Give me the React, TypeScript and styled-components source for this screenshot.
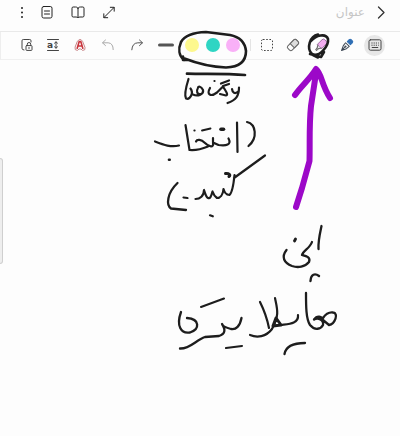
import React from "react";
import styled, { createGlobalStyle } from "styled-components";

const GlobalStyle = createGlobalStyle`
  * { box-sizing: border-box; }
  body { margin: 0; background: #fdfdfd; font-family: "Noto Sans", "DejaVu Sans", sans-serif; }
`;

const Page = styled.div`
  position: relative;
  display: flex;
  flex-direction: column;
  min-height: 100vh;
  overflow: hidden;
  background: #fdfdfd;
`;

const Header = styled.header`
  display: flex;
  align-items: center;
  height: 32px;
  padding: 0 9px 7px 10px;
  border-bottom: 1px solid #e9e9e9;
`;

const HeaderActions = styled.div`
  display: grid;
  grid-template-columns: 24px 26px 36px 26px;
`;

const IconButton = styled.button<{ $active?: boolean }>`
  display: flex;
  flex: none;
  align-items: center;
  justify-content: center;
  justify-self: center;
  width: ${(p) => (p.$active ? 21 : 20)}px;
  height: ${(p) => (p.$active ? 21 : 24)}px;
  padding: 0;
  border: 0;
  border-radius: 50%;
  background: ${(p) => (p.$active ? "#e7e7e7" : "transparent")};
  color: #444;
  cursor: pointer;
`;

const TitleInput = styled.input`
  flex: 1;
  min-width: 0;
  height: 24px;
  padding: 0 6px;
  border: 0;
  outline: 0;
  background: transparent;
  color: #333;
  font: 12px "DejaVu Sans", sans-serif;
  &::placeholder { color: #c6c6c6; opacity: 1; }
`;

const Toolbar = styled.div`
  display: grid;
  grid-template-columns: 26fr 27fr 27fr 29fr 28fr 30fr 23fr 20fr 20fr 14fr 20fr 31fr 25fr 28fr 27fr;
  align-items: center;
  height: 28px;
  padding: 0 12px 1px 13px;
  border-bottom: 1px solid #f0f0f0;
  border-left: 1px solid #eeeeee;
`;

const Swatch = styled.button<{ $color: string }>`
  justify-self: center;
  width: 14px;
  height: 14px;
  padding: 0;
  border: 0;
  border-radius: 50%;
  background: ${(p) => p.$color};
`;

const Divider = styled.span`
  justify-self: center;
  width: 1px;
  height: 12px;
  background: #e4e4e4;
`;

const Note = styled.main`
  display: flex;
  flex: 1;
  padding-top: 98px;
`;

const EdgeHandle = styled.div`
  width: 3px;
  height: 106px;
  border: 1px solid #cfcfcf;
  border-left: 0;
  border-radius: 0 3px 3px 0;
  background: #eeeeee;
`;

const Ink = styled.svg`
  position: absolute;
  top: 0;
  left: 0;
  width: 100%;
  height: auto;
  pointer-events: none;
`;

const Glyph = ({ children }: { children: React.ReactNode }) => (
  <svg width="16" height="16" viewBox="0 0 16 16" fill="none" stroke="currentColor"
    strokeWidth="1" strokeLinecap="round" strokeLinejoin="round" aria-hidden="true">
    {children}
  </svg>
);

const MoreIcon = () => (
  <Glyph><g fill="#222" stroke="none"><circle cx="8" cy="4" r="1" /><circle cx="8" cy="8.5" r="1" /><circle cx="8" cy="13" r="1" /></g></Glyph>
);
const PageIcon = () => (
  <Glyph><g stroke="#222"><rect x="3" y="2.5" width="10" height="11.5" rx="1.7" /><path d="M5.5 7h5M5.5 10h5" /></g></Glyph>
);
const BookIcon = () => (
  <Glyph><path stroke="#222" d="M8 4.2C7.4 3.3 6.7 3 5.5 3H3.2Q2 3 2 4.2v7.6Q2 13 3.2 13h2.9q1.3 0 1.9.9.6-.9 1.9-.9h2.9q1.2 0 1.2-1.2V4.2Q14 3 12.8 3h-2.3C9.3 3 8.6 3.3 8 4.2zM8 4.2v9.3" /></Glyph>
);
const ExpandIcon = () => (
  <Glyph><path stroke="#222" d="M3 13.5 13 3.5M9.3 3.3H13.2V7.2M2.8 9.8v3.9h3.9" /></Glyph>
);
const BackIcon = () => (
  <Glyph><path stroke="#333" strokeWidth="1.3" d="m5.5 3 5.5 5.5L5.5 14" /></Glyph>
);
const LockIcon = () => (
  <Glyph><path d="M12 5V3.8Q12 2.5 10.7 2.5H4.3Q3 2.5 3 3.8v7.4q0 1.8 2 1.8" /><rect x="7" y="8.6" width="6" height="4.8" rx=".7" /><path d="M8.3 8.5V7.2a1.7 1.7 0 0 1 3.4 0v1.3M10 10.5v1" /></Glyph>
);
const Letter = styled.text`
  font-family: "DejaVu Sans", sans-serif;
  font-size: 9px;
  font-weight: 700;
`;
const TextSizeIcon = () => (
  <Glyph><path d="M2.5 2.5h11M2.5 13.5h11M11 5v6M9.5 6.2 11 4.8l1.5 1.4M9.5 9.8l1.5 1.4 1.5-1.4" /><Letter x="2" y="11" fill="#444" stroke="none">a</Letter></Glyph>
);
const StyleTextIcon = () => (
  <Glyph>
    <path stroke="#c98588" d="M5.4 4.4Q8 .4 10.6 4.4L13 10.5q.7 3-2.4 2.9L8.9 12H7.1l-1.7 1.4Q2.3 13.5 3 10.5z" />
    <path stroke="#c9353d" strokeWidth="1.6" d="M5.2 11.2 7.2 4.6h1.6l2 6.6M6.2 9h3.6" />
  </Glyph>
);
const UndoIcon = () => (
  <Glyph><path stroke="#aaa" d="M5.5 3 2.5 5.8l3 2.8M2.8 5.8h5.4q5 .4 5 6.8" /></Glyph>
);
const RedoIcon = () => (
  <Glyph><path stroke="#555" d="m10.5 3 3 2.8-3 2.8M13.2 5.8H8.8q-5.5.2-6 7" /></Glyph>
);
const StrokeIcon = () => (
  <Glyph><path stroke="#555" strokeWidth="3" d="M1.5 8h13" /></Glyph>
);
const SelectIcon = () => (
  <Glyph><rect x="2.5" y="2.5" width="11" height="11" rx="1.5" strokeDasharray="1.6 1.6" strokeLinecap="butt" /></Glyph>
);
const EraserIcon = () => (
  <Glyph><g transform="rotate(-45 8 8)"><rect x="2" y="5" width="12" height="6" rx="1.8" stroke="#666" /><path fill="#ddd" stroke="#666" d="M7 5h5.2q1.8 0 1.8 1.8v2.4q0 1.8-1.8 1.8H7z" /></g></Glyph>
);
const HighlighterIcon = () => (
  <Glyph><g transform="rotate(-45 8 8)"><path fill="#f3adf0" stroke="#8d5c93" strokeWidth=".8" d="M6 5h6.4Q14.4 5 14.4 7v2q0 2-2 2H6z" /><path stroke="#666" d="M6 5.8 3.5 7v2L6 10.2M3.5 7.3 1 7.6v1.2h2.5" /></g></Glyph>
);
const PenIcon = () => (
  <Glyph><g transform="rotate(-45 8 8)"><path fill="#2f6fb5" stroke="#2f6fb5" d="M10.6 5.8h2.7q1.4 0 1.4 1.4v1.6q0 1.4-1.4 1.4h-2.7z" /><path stroke="#3c4754" d="M8.6 5.4 5 5.8.3 8 5 10.2l3.6.4zM.5 8h4" /><circle cx="5.8" cy="8" r=".6" stroke="#3c4754" /></g></Glyph>
);
const KeyboardIcon = () => (
  <Glyph><rect x="2" y="2.8" width="12" height="10.4" rx="1.5" /><path strokeDasharray="1.2 1" strokeLinecap="butt" d="M4.4 6h7.4M4.4 8.2h7.4" /><path d="M5.2 10.5h5.6" /></Glyph>
);

/* Freehand strokes, in page coordinates at a 400 unit width. */
const strokes = [
  // ring round the colours and the bar under it
  { w: 2.6, d: "M184 60C179 56 178 49 181 42C185 35 193 32.5 206 32L230 35C240 37 245 42 246 51C246 60 241 67 226 67.5C210 67 196 63 183 58M183 56.5V60L187 60" },
  { w: 2.7, d: "M187 73.7C205 74.2 226 73.5 245 75" },
  // ring round the highlighter
  { w: 2.6, d: "M318 34.5C310 36 306 48 312 54C319 58 329 46 328 39C326 33 316 35 311 41M310 54L321 57L324 52M313 55L318 57.5" },
  // first word
  { w: 2.2, d: "M188.5 79C186 87 184 95 186 98.5C190 100 194 93 190.5 88.5M193 94.5C198 97 204 94 203 90C201 86 198 86 198 88M198 88C196 91 197 95 201 94" },
  { w: 2.2, d: "M210 88C206 95 211 97 217 92.5L223 86.5C225 90 229 95 226 95.5L220 94M223 86L229 84M221 83.5L229 80.5" },
  { w: 2.2, d: "M239 87.5C239 96 236 100 227.5 103M232 89C232.5 93 235 94 237.5 92" },
  { w: 1.8, d: "M214.3 81h.4" },
  // second word, with its opening bracket
  { w: 2.2, d: "M247 122C256 124 258 138 248.5 146" },
  { w: 2.2, d: "M237 122.5L237.5 152" },
  { w: 2.2, d: "M228.5 138.5C232 145 226 146 218.5 145L213 142.5V138M213 143C214 148 209 147 205 143C201 139 197 139 196 141.5M208 146.5C202 149 195 150.5 189.5 150L185.5 125" },
  { w: 1.9, d: "M202 130.5L210.5 128.5M194.3 130.5h.4" },
  { w: 3.6, d: "M221 129.3L223.5 129.3" },
  { w: 2.2, d: "M155 141.5C164 145 171 147.5 179 145.5" },
  { w: 2.6, d: "M169 159.7h.7" },
  // third word, with its closing bracket
  { w: 2.2, d: "M265 155.5L234 178M234.5 175C233.5 185 232 193 229.5 195C226 195 224 191 223.5 189C223 195 220 198 217 198C214 196 213 193 212.5 191.5C211 197 210 199 208 198C206 197 205 193 204 190C204 196 200 199 195.5 199" },
  { w: 3, d: "M225.5 173.5C229 173 231 175 229 176.5" },
  { w: 2.3, d: "M177.5 183C167 193 166 205 171 208.5L186 210" },
  { w: 2.2, d: "M183.5 197.5L187.5 198M210 215.3L212.8 216.3" },
  // fourth word
  { w: 2.3, d: "M321.5 226C320 233 318 241 318.5 249" },
  { w: 2.3, d: "M312 242C310 248 303 251 302 255C306 256 311 257 309 262C305 267 298 268 292 266C284 263 281 257 286.5 250" },
  { w: 2.8, d: "M294.5 241L295.5 239" },
  { w: 2.4, d: "M310.5 281C311 274 315 273 319 276" },
  // last line
  { w: 2.3, d: "M306 293C306 306 306 319 310 325C315 331 321 329 323 325C324 320 318 317 314 319.5M314 319.5C317 315 322 316 323 320L329 325C335 324 339 313 333 312.5C329 312 325 315 323 318" },
  { w: 2.2, d: "M298 315C299 324 288 324 281 325M275 298C277 308 280 315 272 329C266 337 257 338 250 335M260 302C263 308 267 318 269 328" },
  { w: 3, d: "M276 318L281 325L273 326Z" },
  { w: 2.3, d: "M284.5 354C286 345 296 343 305 343" },
  { w: 2.3, d: "M241.5 318C240 326 236 330 231 329C227 328 223 327 222 324C226 330 225 334 219 336L205 337C196 340 190 349 180 348.5" },
  { w: 2.3, d: "M181 312C176 326 181 334 190 332.5C200 329 200 319 187 318" },
  { w: 2.1, d: "M201 307L224 298.5M226 348L242 346" },
];

const Drawing = () => (
  <Ink viewBox="0 0 400 436" fill="none" strokeLinecap="round" strokeLinejoin="round" aria-hidden="true">
    {strokes.map((s) => <path key={s.d} d={s.d} stroke="#1d1d1d" strokeWidth={s.w} />)}
    <path d="M296 207L302 188L309.5 161C310 143 309 125 311 106L316.5 70M295 95C302 85 310 79 316 69C322 74 321 84 330 98" stroke="#9c08c8" strokeWidth="6" />
  </Ink>
);

export default function App() {
  return (
    <Page>
      <GlobalStyle />
      <Header>
        <HeaderActions>
          <IconButton aria-label="More"><MoreIcon /></IconButton>
          <IconButton aria-label="Page"><PageIcon /></IconButton>
          <IconButton aria-label="Reading"><BookIcon /></IconButton>
          <IconButton aria-label="Full screen"><ExpandIcon /></IconButton>
        </HeaderActions>
        <TitleInput dir="rtl" aria-label="عنوان" placeholder="عنوان" />
        <IconButton aria-label="Back"><BackIcon /></IconButton>
      </Header>
      <Toolbar role="toolbar">
        <IconButton aria-label="Lock canvas"><LockIcon /></IconButton>
        <IconButton aria-label="Text size"><TextSizeIcon /></IconButton>
        <IconButton aria-label="Text style"><StyleTextIcon /></IconButton>
        <IconButton aria-label="Undo"><UndoIcon /></IconButton>
        <IconButton aria-label="Redo"><RedoIcon /></IconButton>
        <IconButton aria-label="Thickness"><StrokeIcon /></IconButton>
        <Swatch $color="#fdf88e" aria-label="Yellow" />
        <Swatch $color="#2fd5c3" aria-label="Turquoise" />
        <Swatch $color="#f9b0f7" aria-label="Pink" />
        <Divider />
        <IconButton aria-label="Select"><SelectIcon /></IconButton>
        <IconButton aria-label="Eraser"><EraserIcon /></IconButton>
        <IconButton aria-label="Highlighter"><HighlighterIcon /></IconButton>
        <IconButton aria-label="Pen"><PenIcon /></IconButton>
        <IconButton $active aria-label="Keyboard"><KeyboardIcon /></IconButton>
      </Toolbar>
      <Note><EdgeHandle /></Note>
      <Drawing />
    </Page>
  );
}
